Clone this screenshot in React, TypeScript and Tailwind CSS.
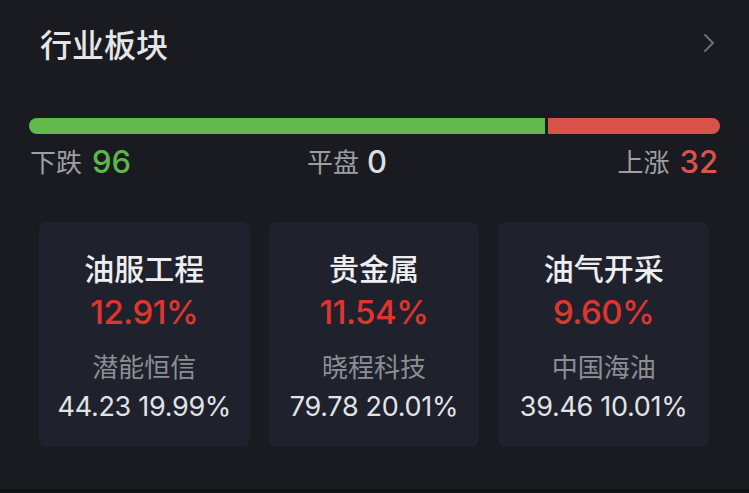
import React from 'react';

interface Sector {
  name: string;
  change: string;
  leader: string;
  price: string;
  leaderChange: string;
}

const sectors: Sector[] = [
  { name: '油服工程', change: '12.91%', leader: '潜能恒信', price: '44.23', leaderChange: '19.99%' },
  { name: '贵金属', change: '11.54%', leader: '晓程科技', price: '79.78', leaderChange: '20.01%' },
  { name: '油气开采', change: '9.60%', leader: '中国海油', price: '39.46', leaderChange: '10.01%' },
];

const SectorCard: React.FC<{ sector: Sector }> = ({ sector }) => (
  <div className="flex flex-col items-center rounded-[8px] bg-[#1f222c] pt-[30px] pb-[27px]">
    <div className="font-['Noto_Sans_CJK_SC',sans-serif] text-[30px] leading-[30px] font-medium text-[#eeeef0]">
      {sector.name}
    </div>
    <div className="mt-[14px] font-['Inter',sans-serif] text-[33px] leading-[33px] font-medium tracking-[-0.5px] text-[#e0352f]">
      {sector.change}
    </div>
    <div className="mt-[24px] font-['Noto_Sans_CJK_SC',sans-serif] text-[26px] leading-[26px] text-[#8d8e93]">
      {sector.leader}
    </div>
    <div className="mt-[14px] font-['Inter',sans-serif] text-[27px] leading-[27px] tracking-[-0.3px] text-[#e2e3e6]">
      {sector.price} {sector.leaderChange}
    </div>
  </div>
);

export default function App() {
  const down = 96;
  const flat = 0;
  const up = 32;

  return (
    <div className="flex h-[493px] w-[749px] flex-col bg-[#191b20]">
      {/* header */}
      <div className="flex items-center justify-between pt-[27px] pl-[40px] pr-[34px]">
        <h2 className="font-['Noto_Sans_CJK_SC',sans-serif] text-[32px] leading-[32px] font-medium text-[#e6e6e8]">
          行业板块
        </h2>
        <svg width="12" height="20" viewBox="0 0 12 20" fill="none">
          <path d="M2 2l8 8-8 8" stroke="#6d7076" strokeWidth="2" strokeLinecap="round" strokeLinejoin="round" />
        </svg>
      </div>

      {/* up / down ratio bar */}
      <div className="mt-[59px] flex h-[16px] gap-[3px] px-[29px]">
        <div className="h-full rounded-l-full bg-[#62b94c]" style={{ flexGrow: down }} />
        <div className="h-full rounded-r-full bg-[#d9534a]" style={{ flexGrow: up }} />
      </div>

      <div className="mt-[11px] flex h-[32px] items-center pl-[30px] pr-[31px]">
        <div className="flex w-[277px] items-center gap-[10px]">
          <span className="font-['Noto_Sans_CJK_SC',sans-serif] text-[26px] leading-none text-[#9d9ea3]">下跌</span>
          <span className="font-['Inter',sans-serif] text-[31px] leading-none font-medium text-[#5cb84a]">{down}</span>
        </div>
        <div className="flex items-center gap-[8px]">
          <span className="font-['Noto_Sans_CJK_SC',sans-serif] text-[26px] leading-none text-[#9d9ea3]">平盘</span>
          <span className="font-['Inter',sans-serif] text-[31px] leading-none font-medium text-[#dcdde0]">{flat}</span>
        </div>
        <div className="ml-auto flex items-center gap-[10px]">
          <span className="font-['Noto_Sans_CJK_SC',sans-serif] text-[26px] leading-none text-[#9d9ea3]">上涨</span>
          <span className="font-['Inter',sans-serif] text-[31px] leading-none font-medium text-[#d9534f]">{up}</span>
        </div>
      </div>

      {/* top sectors */}
      <div className="mt-[45px] grid grid-cols-3 gap-[19px] pl-[39px] pr-[40px]">
        {sectors.map((s) => (
          <SectorCard key={s.name} sector={s} />
        ))}
      </div>

      <div className="mt-auto h-[4px] bg-[#111215]" />
    </div>
  );
}
